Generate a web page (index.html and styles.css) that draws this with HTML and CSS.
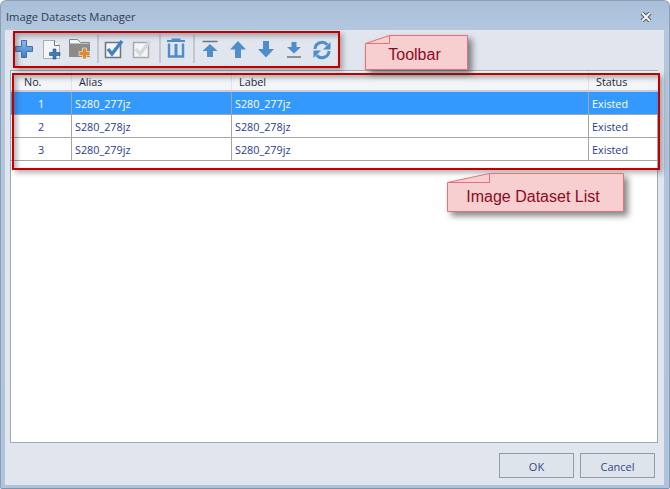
FILE: index.html
```html
<!DOCTYPE html>
<html lang="en">
<head>
  <meta charset="UTF-8" />
  <title>Image Datasets Manager</title>
  <link rel="stylesheet" href="styles.css">
</head>
<body>
  <div class="window">
    <div class="titlebar">
      <span class="title">Image Datasets Manager</span>
      <svg class="close" width="12" height="10" viewBox="0 0 12 10">
        <path d="M2 1 L10 9 M10 1 L2 9" stroke="#4a5563" stroke-width="4" />
        <path d="M2 1 L10 9 M10 1 L2 9" stroke="#f4f6f9" stroke-width="2" />
      </svg>
    </div>

    <div class="panel">
      <div class="toolbar">
        <span class="tool">
          <svg width="24" height="24" viewBox="0 0 24 24">
            <defs>
              <linearGradient id="plus-fill" x1="0" y1="0" x2="0" y2="1">
                <stop offset="0" stop-color="#8dbcec" />
                <stop offset="1" stop-color="#3f7cc4" />
              </linearGradient>
            </defs>
            <path d="M9.5 3.5h5v6h6v5h-6v6h-5v-6h-6v-5h6z" fill="url(#plus-fill)" stroke="#3d73b4" />
          </svg>
        </span>
        <span class="tool">
          <svg width="24" height="24" viewBox="0 0 24 24">
            <path d="M3.500 3.500h11l5 5v13h-16z" fill="#f3f5f9" stroke="#a9adb5" />
            <path d="M14.500 3.500v5h5" fill="#fff" stroke="#6d7278" />
            <path d="M13 12h3v3.500h4v3h-4V22h-3v-3.500H9.500v-3H13z" fill="#3f7cb8" stroke="#1f4f7d" stroke-width=".6" />
          </svg>
        </span>
        <span class="tool">
          <svg width="24" height="24" viewBox="0 0 24 24">
            <path d="M1.500 2.500h8l3 3h9v5h-20z" fill="#f5f6f8" stroke="#84868a" />
            <path d="M1 6.500h21V20H1z" fill="#8b8b8b" />
            <path d="M14.500 11h4v3.500H22v4h-3.500V22h-4v-3.500H11v-4h3.500z" fill="#e08a2c" stroke="#f3f5f9" stroke-width=".6" />
          </svg>
        </span>
        <span class="sep sep-first"></span>
        <span class="tool">
          <svg width="24" height="24" viewBox="0 0 24 24">
            <rect x="4.500" y="5.500" width="15" height="15" fill="#f3f5f9" stroke="#6f7479" stroke-width="1.500" />
            <path d="M7 12l4 5L21 4" fill="none" stroke="#3f82c9" stroke-width="3.400" />
          </svg>
        </span>
        <span class="tool">
          <svg width="24" height="24" viewBox="0 0 24 24">
            <rect x="4.500" y="5.500" width="15" height="15" fill="#f3f5f9" stroke="#a7a9ab" stroke-width="1.500" />
            <path d="M7 12l4 5L21 4" fill="none" stroke="#d4d6d9" stroke-width="3.400" />
          </svg>
        </span>
        <span class="sep sep-wide"></span>
        <span class="tool">
          <svg width="24" height="24" viewBox="0 0 24 24">
            <path d="M3 4h18M8.500 4V2.500h7V4" fill="none" stroke="#4f8dcb" stroke-width="2" />
            <path d="M5 6.500v13h14v-13" fill="none" stroke="#4f8dcb" stroke-width="2.400" />
            <path d="M12 7v12" stroke="#4f8dcb" stroke-width="3" />
          </svg>
        </span>
        <span class="sep"></span>
        <span class="tool">
          <svg width="24" height="24" viewBox="0 0 24 24">
            <path d="M4.500 4.500h15" stroke="#70757b" stroke-width="1.500" />
            <path d="M12 7l7.500 7H15v6H9v-6H4.500z" fill="#4f8dcb" />
          </svg>
        </span>
        <span class="tool">
          <svg width="24" height="24" viewBox="0 0 24 24">
            <path d="M12 4l8 8.500h-5V21H9v-8.500H4z" fill="#4f8dcb" />
          </svg>
        </span>
        <span class="tool">
          <svg width="24" height="24" viewBox="0 0 24 24">
            <path d="M12 20.500l-8-8.500h5V4h6v8h5z" fill="#4f8dcb" />
          </svg>
        </span>
        <span class="tool">
          <svg width="24" height="24" viewBox="0 0 24 24">
            <path d="M12 16.500L5 10h4.500V5h5v5H19z" fill="#4f8dcb" />
            <path d="M5 20h14" stroke="#70757b" stroke-width="1.500" />
          </svg>
        </span>
        <span class="tool">
          <svg width="24" height="24" viewBox="0 0 24 24">
            <path d="M5 12a7 7 0 0 1 12.300-4.200" fill="none" stroke="#4f8dcb" stroke-width="3" />
            <path d="M20.500 5v7.500H13z" fill="#4f8dcb" />
            <path d="M19 14a7 7 0 0 1-12.300 4.200" fill="none" stroke="#4f8dcb" stroke-width="3" />
            <path d="M3.500 21v-7.500H11z" fill="#4f8dcb" />
          </svg>
        </span>
      </div>

      <div class="list">
        <table class="grid">
          <thead>
            <tr>
              <th class="col-no">No.</th>
              <th class="col-alias">Alias</th>
              <th class="col-label">Label</th>
              <th class="col-status">Status</th>
            </tr>
          </thead>
          <tbody>
            <tr class="selected">
              <td class="num">1</td>
              <td>S280_277jz</td>
              <td>S280_277jz</td>
              <td>Existed</td>
            </tr>
            <tr>
              <td class="num">2</td>
              <td>S280_278jz</td>
              <td>S280_278jz</td>
              <td>Existed</td>
            </tr>
            <tr>
              <td class="num">3</td>
              <td>S280_279jz</td>
              <td>S280_279jz</td>
              <td>Existed</td>
            </tr>
          </tbody>
        </table>
      </div>

      <div class="footer">
        <button class="btn">OK</button>
        <button class="btn">Cancel</button>
      </div>
    </div>

    <!-- red annotations drawn over the dialog -->
    <div class="mark mark-toolbar"></div>
    <div class="mark mark-list"></div>

    <div class="callout callout-toolbar">
      <svg class="callout-bg" width="103" height="35" viewBox="0 0 103 35">
        <path d="M.5 8.500L24.500.5H102.500V34.500H.5z" fill="#f7cfd0" stroke="#e4717a" />
        <path d="M.5 8.500H24.500V.5" fill="none" stroke="#e4717a" />
      </svg>
      <span class="callout-text">Toolbar</span>
    </div>

    <div class="callout callout-list">
      <svg class="callout-bg" width="177" height="39" viewBox="0 0 177 39">
        <path d="M.5 9.500L42.500.5H176.500V38.500H.5z" fill="#f7cfd0" stroke="#e4717a" />
        <path d="M.5 9.500H42.500V.5" fill="none" stroke="#e4717a" />
      </svg>
      <span class="callout-text">Image Dataset List</span>
    </div>
  </div>
</body>
</html>
```

FILE: styles.css
```css
body {
  margin: 0;
  background: #fff;
  font-family: "Open Sans", "Noto Sans", sans-serif;
  font-size: 10.8px;
}

.window {
  position: relative;
  box-sizing: border-box;
  width: 670px;
  height: 489px;
  padding: 0 5px 3px 4px;
  display: flex;
  flex-direction: column;
  background: linear-gradient(#a9bfd9, #b3c7df 30px, #aec3dc);
  border: 1px solid #8f9fb3;
  border-bottom-color: #7f93ad;
  border-radius: 6px 6px 2px 2px;
}

.titlebar {
  height: 29px;
  display: flex;
  align-items: center;
  justify-content: space-between;
  padding: 2px 12px 0 1px;
  box-sizing: border-box;
  flex-shrink: 0;
}

.title {
  color: #2d3c50;
  font-size: 11.2px;
}

.panel {
  flex: 1;
  display: flex;
  flex-direction: column;
  background: #e0e5ee;
  min-height: 0;
}

.toolbar {
  height: 40px;
  display: flex;
  align-items: center;
  flex-shrink: 0;
  padding-left: 5px;
  padding-bottom: 2px;
  box-sizing: border-box;
}

.tool {
  width: 28px;
  display: flex;
  justify-content: center;
}

.sep {
  width: 2px;
  height: 28px;
  margin: 0 1px 0 3px;
  background: #c3c8cf;
}

.sep-first {
  margin-right: 0;
}

.sep-wide {
  margin-left: 4px;
}

.list {
  flex: 1;
  margin: 0 6px 0 5px;
  background: #fff;
  border: 1px solid #a4a9b0;
}

.grid {
  width: 649px;
  table-layout: fixed;
  border-collapse: collapse;
  color: #2a3a94;
}

.grid th {
  height: 18px;
  padding: 1px 0 0 7px;
  text-align: left;
  font-weight: normal;
  color: #1c2740;
  background: #f3f5f8;
  border-right: 1px solid #dfe2e6;
  border-bottom: 2px solid #c9ccd1;
}

.grid th.col-no {
  width: 47px;
  padding-left: 13px;
}

.grid th.col-alias {
  width: 152px;
}

.grid th.col-label {
  width: 349px;
}

.grid td {
  height: 22px;
  padding: 0 0 0 3px;
  border-right: 1px solid #a6a6a6;
  border-bottom: 1px solid #a6a6a6;
}

.grid td:last-child,
.grid th:last-child {
  border-right: 0;
}

.grid td.num {
  padding: 0;
  text-align: center;
}

.selected td {
  background: #3399ff;
  color: #fff;
}

.footer {
  height: 42px;
  display: flex;
  justify-content: flex-end;
  align-items: flex-start;
  gap: 6px;
  padding: 10px 9px 0 0;
  box-sizing: border-box;
  flex-shrink: 0;
}

.btn {
  width: 75px;
  height: 25px;
  padding: 1px 0 0;
  font-family: inherit;
  font-size: 11px;
  color: #2c4a86;
  background: #dfe4ec;
  border: 1px solid #8f9cab;
}

.mark {
  position: absolute;
  box-sizing: border-box;
  border: 2px solid #c00000;
  box-shadow: 3px 3px 5px rgba(60, 60, 60, .38), inset 3px 3px 5px rgba(60, 60, 60, .38);
}

.mark-toolbar {
  left: 12px;
  top: 30px;
  width: 327px;
  height: 37px;
}

.mark-list {
  left: 11px;
  top: 72px;
  width: 648px;
  height: 97px;
}

.callout {
  position: absolute;
  display: flex;
  align-items: center;
  justify-content: center;
  color: #8c0a1e;
  font-family: "Liberation Sans", Arial, sans-serif;
}

.callout-bg {
  position: absolute;
  left: 0;
  top: 0;
  filter: drop-shadow(4px 4px 3px rgba(50, 50, 50, .6));
}

.callout-text {
  position: relative;
  font-size: 16px;
}

.callout-toolbar {
  left: 364px;
  top: 34px;
  width: 103px;
  height: 35px;
  padding: 5px 4px 0 0;
  box-sizing: border-box;
}

.callout-list {
  left: 446px;
  top: 172px;
  width: 177px;
  height: 39px;
  padding: 8px 5px 0 0;
  box-sizing: border-box;
}
```
